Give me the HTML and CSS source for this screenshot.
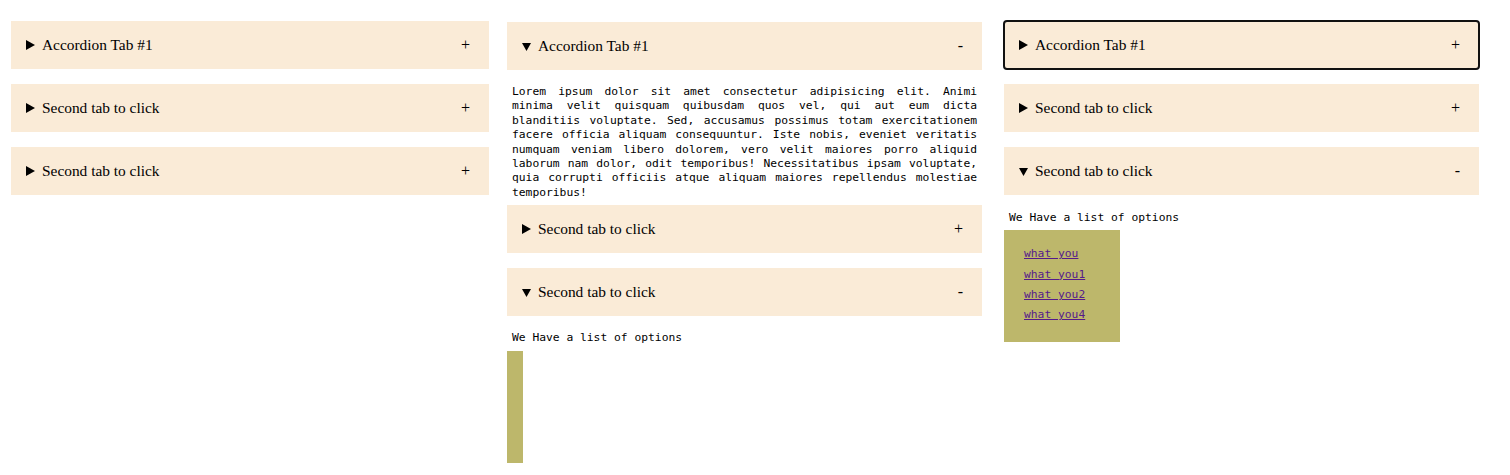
FILE: index.html
```html
<!DOCTYPE html>
<html lang="en">
<head>
<meta charset="utf-8">
<title>Accordion</title>
<link rel="stylesheet" href="styles.css">
</head>
<body>
<div class="page">
  <div class="accordion col-1">
    <div class="item">
      <div class="header"><svg class="arrow" viewBox="0 0 9 10"><polygon points="0,0 9,5 0,10"/></svg><span class="title">Accordion Tab #1</span><span class="sign">+</span></div>
    </div>
    <div class="item">
      <div class="header"><svg class="arrow" viewBox="0 0 9 10"><polygon points="0,0 9,5 0,10"/></svg><span class="title">Second tab to click</span><span class="sign">+</span></div>
    </div>
    <div class="item">
      <div class="header"><svg class="arrow" viewBox="0 0 9 10"><polygon points="0,0 9,5 0,10"/></svg><span class="title">Second tab to click</span><span class="sign">+</span></div>
    </div>
  </div>

  <div class="accordion col-2">
    <div class="item open">
      <div class="header"><svg class="arrow down" viewBox="0 0 9 8"><polygon points="0,0 9,0 4.5,8"/></svg><span class="title">Accordion Tab #1</span><span class="sign">-</span></div>
      <div class="panel">
        <p class="text">Lorem ipsum dolor sit amet consectetur adipisicing elit. Animi minima velit quisquam quibusdam quos vel, qui aut eum dicta blanditiis voluptate. Sed, accusamus possimus totam exercitationem facere officia aliquam consequuntur. Iste nobis, eveniet veritatis numquam veniam libero dolorem, vero velit maiores porro aliquid laborum nam dolor, odit temporibus! Necessitatibus ipsam voluptate, quia corrupti officiis atque aliquam maiores repellendus molestiae temporibus!</p>
      </div>
    </div>
    <div class="item">
      <div class="header"><svg class="arrow" viewBox="0 0 9 10"><polygon points="0,0 9,5 0,10"/></svg><span class="title">Second tab to click</span><span class="sign">+</span></div>
    </div>
    <div class="item open">
      <div class="header"><svg class="arrow down" viewBox="0 0 9 8"><polygon points="0,0 9,0 4.5,8"/></svg><span class="title">Second tab to click</span><span class="sign">-</span></div>
      <div class="panel">
        <p class="list-label">We Have a list of options</p>
        <div class="options options-closing"></div>
      </div>
    </div>
  </div>

  <div class="accordion col-3">
    <div class="item">
      <div class="header focused"><svg class="arrow" viewBox="0 0 9 10"><polygon points="0,0 9,5 0,10"/></svg><span class="title">Accordion Tab #1</span><span class="sign">+</span></div>
    </div>
    <div class="item">
      <div class="header"><svg class="arrow" viewBox="0 0 9 10"><polygon points="0,0 9,5 0,10"/></svg><span class="title">Second tab to click</span><span class="sign">+</span></div>
    </div>
    <div class="item open">
      <div class="header"><svg class="arrow down" viewBox="0 0 9 8"><polygon points="0,0 9,0 4.5,8"/></svg><span class="title">Second tab to click</span><span class="sign">-</span></div>
      <div class="panel">
        <p class="list-label">We Have a list of options</p>
        <ul class="options">
          <li><a href="#a">what you</a></li>
          <li><a href="#b">what you1</a></li>
          <li><a href="#c">what you2</a></li>
          <li><a href="#d">what you4</a></li>
        </ul>
      </div>
    </div>
  </div>
</div>
</body>
</html>
```

FILE: styles.css
```css
html, body {
  margin: 0;
  padding: 0;
  background: #ffffff;
}

.page {
  display: flex;
  align-items: flex-start;
  padding: 21px 0 0 11px;
}

.accordion {
  display: flex;
  flex-direction: column;
}

.col-1 {
  width: 478px;
}

.col-2 {
  width: 475px;
  margin-left: 18px;
  margin-top: 1px;
}

.col-3 {
  width: 475px;
  margin-left: 22px;
}

.header {
  display: flex;
  align-items: center;
  height: 48px;
  box-sizing: border-box;
  padding: 0 19px 0 15px;
  background: #faebd7;
  font-family: "Liberation Serif", "Times New Roman", serif;
  font-size: 15.4px;
  color: #000;
  margin-bottom: 15px;
}

.item.open .header {
  margin-bottom: 0;
}

.header.focused {
  outline: 2px solid #111111;
  outline-offset: -1px;
  border-radius: 3px;
}

.arrow {
  width: 9px;
  height: 10px;
  margin-right: 7px;
  flex: none;
  fill: #000;
}

.arrow.down {
  height: 8px;
  margin-top: 2px;
}

.title {
  flex: 1;
}

.sign {
  flex: none;
  font-size: 16px;
}

.panel {
  padding: 16px 5px 5px;
  font-family: "DejaVu Sans Mono", "Liberation Mono", monospace;
  font-size: 11.3px;
  line-height: 14.4px;
  color: #000;
}

.col-2 .panel {
  padding-top: 15px;
}

.text {
  margin: 0;
  text-align: justify;
}

.list-label {
  margin: 0 0 5px;
}

.options {
  margin: 0 0 0 -5px;
  list-style: none;
  background: #bdb76b;
  width: 116px;
  height: 112px;
  box-sizing: border-box;
  padding: 14px 20px 0;
  line-height: 20.3px;
}

.options-closing {
  width: 16px;
  padding: 0;
}

.options a {
  color: #551a8b;
  text-decoration: underline;
}
```
